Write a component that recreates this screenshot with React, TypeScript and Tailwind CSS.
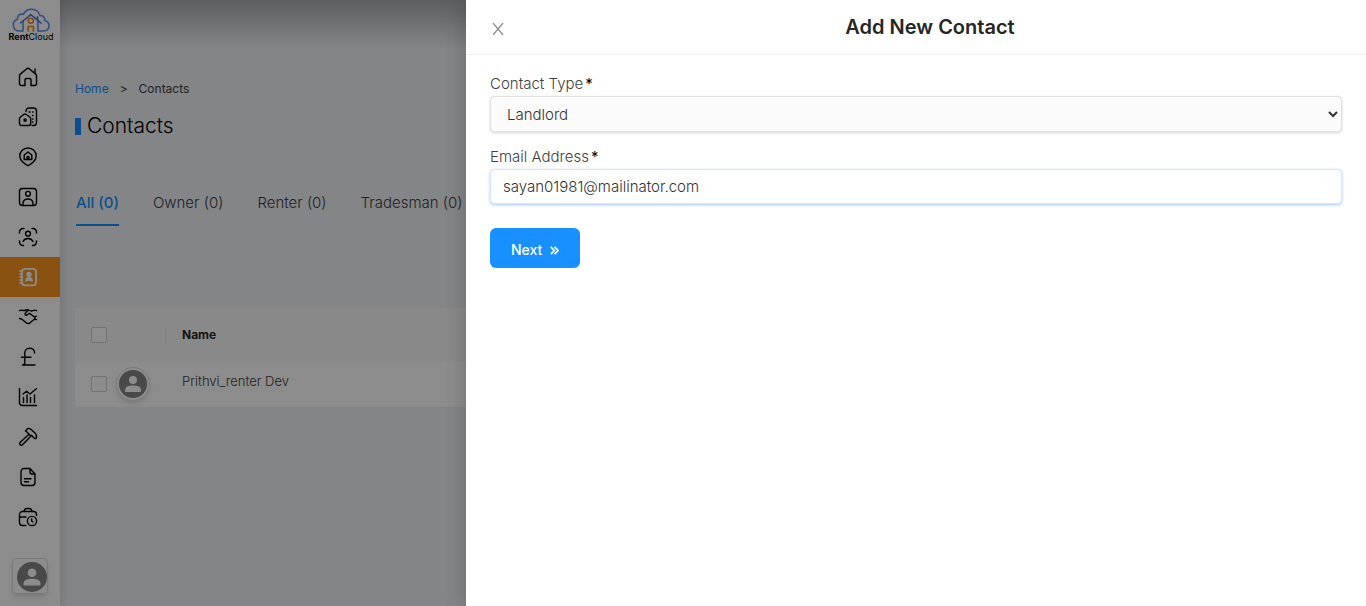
import React from "react";

const font = "font-['Inter','Liberation_Sans',sans-serif]";

function Icon({ children }: { children: React.ReactNode }) {
  return (
    <svg
      aria-hidden="true"
      viewBox="0 0 20 20"
      className="size-5"
      fill="none"
      stroke="currentColor"
      strokeWidth="1.4"
      strokeLinecap="round"
      strokeLinejoin="round"
    >
      {children}
    </svg>
  );
}

const items: { label: string; active?: boolean; icon: React.ReactNode }[] = [
  {
    label: "Dashboard",
    icon: (
      <path d="M7 18.5H3.5A2 2 0 0 1 1.5 16.5V8.8Q1.5 7.8 2.3 7.1L8.8 1.7Q10 .9 11.2 1.7L17.7 7.1Q18.5 7.8 18.5 8.8V16.5A2 2 0 0 1 16.5 18.5H13V13A1.5 1.5 0 0 0 11.5 11.5H8.5A1.5 1.5 0 0 0 7 13ZM17 6V2" />
    ),
  },
  {
    label: "Properties",
    icon: (
      <>
        <path d="M8 4.5V4A3 3 0 0 1 11 1H15.5A3 3 0 0 1 18.5 4V15.5A3 3 0 0 1 15.5 18.5H14" />
        <path d="M1.5 11.7Q1.5 10.8 2.2 10.2L6 7.3Q7 6.7 8 7.3L12 10.2Q12.7 10.8 12.7 11.7V16.5A2 2 0 0 1 10.7 18.5H3.5A2 2 0 0 1 1.5 16.5Z" />
        <rect x="6.2" y="12.2" width="1.8" height="1.8" fill="currentColor" />
        <path d="M11 5H12M14.5 5H15M14.5 8.5H15M14.5 12H15M14.5 15H15" />
      </>
    ),
  },
  {
    label: "Locations",
    icon: (
      <>
        <path d="M10 18.7Q8 18 5 15.3Q1.8 12.4 1.8 9A8.2 8 0 0 1 18.2 9Q18.2 12.4 15 15.3Q12 18 10 18.7Z" />
        <path d="M6.2 12.5V8L10 5L13.8 8V12.5Z" />
        <path d="M9 12V10Q10 8.8 11 10V12" fill="currentColor" />
      </>
    ),
  },
  {
    label: "Profile",
    icon: (
      <>
        <rect x="1.5" y="1.5" width="17" height="17" rx="3" />
        <circle cx="10" cy="6.8" r="2.4" />
        <path d="M5 18V16Q5.5 12 10 12T15 16V18" />
      </>
    ),
  },
  {
    label: "Tenants",
    icon: (
      <>
        <path d="M1.5 6V5A3.5 3.5 0 0 1 5 1.5H6M14 1.5H15A3.5 3.5 0 0 1 18.5 5V6M18.5 14V15A3.5 3.5 0 0 1 15 18.5H14.5M5.5 18.5H5A3.5 3.5 0 0 1 1.5 15V14" />
        <circle cx="10" cy="6.7" r="2.4" />
        <path d="M5 14.5Q6.5 11.5 10 11.5T15 14.5" />
      </>
    ),
  },
  {
    label: "Contacts",
    active: true,
    icon: (
      <>
        <rect x="4" y="1.8" width="14" height="16.5" rx="3" strokeWidth="1.8" />
        <path d="M1.8 4H4M1.8 7H4M1.8 10H4M1.8 13H4M1.8 16H4" strokeWidth="1.6" />
        <circle cx="11" cy="7.4" r="2" fill="currentColor" />
        <path d="M8 14Q8 10.8 11 10.8T14 14L11 12.8Z" fill="currentColor" />
      </>
    ),
  },
  {
    label: "Agreements",
    icon: (
      <path d="M1.5 3.6Q3 2.8 4.5 3.3T8.5 3Q9.5 2.6 10.5 3Q13 4.5 15 3.6T18.5 3.6M10 3.2L7.2 6.4Q6.6 8.8 9 8L11.5 6.2L17 10.5Q17.5 11.5 16.5 12M16.5 9.8L18.5 9.2M1.5 11.5Q3.5 11.5 4.5 12.8L8.5 16Q10 17.2 11.5 16.2L15 13.2Q16.5 12 18.5 12.6" />
    ),
  },
  {
    label: "Payments",
    icon: <path d="M16.5 6V5.2A4.8 4.2 0 0 0 11.6 1.2A5 4.7 0 0 0 6.8 5.8V15.5Q6.8 18 4.5 18H17M3.5 10.2H13" />,
  },
  {
    label: "Reports",
    icon: (
      <path d="M1.5 1.5V15.5A3 3 0 0 0 4.5 18.5H18.5M5.5 15.5V10.5M9 15.5V8M12.5 15.5V10.5M16.5 15.5V8M5 7L8.5 4.2L12 7L18.3 1.8" />
    ),
  },
  {
    label: "Maintenance",
    icon: (
      <path d="M7.5 4L9.8 1.6Q11 1 12.2 1.8L17.5 6.5Q19.2 9.5 18 11.4Q16.8 12 15.7 10.6L13.6 8.5L12 8.2L9.2 5.3ZM11 7.2L2 15.5Q1.2 16.8 2.1 17.7Q3.2 18.8 4.5 17.8L13 9" />
    ),
  },
  {
    label: "Documents",
    icon: (
      <path d="M12 1.5H6A3 3 0 0 0 3 4.5V15.5A3 3 0 0 0 6 18.5H14A3 3 0 0 0 17 15.5V7L12 1.5V5A2 2 0 0 0 14 7H17M6.5 11.7H13M6.5 14.7H10.5" />
    ),
  },
  {
    label: "Work history",
    icon: (
      <>
        <path d="M8 18.5H4.5A3 3 0 0 1 1.5 15.5V7.5A3 3 0 0 1 4.5 4.5H15.5A3 3 0 0 1 18.5 7.5V8.5M6 4.2Q6.5 1.5 9 1.5H11Q13.5 1.5 14 4.2M1.5 10H8" />
        <circle cx="14" cy="14" r="4.6" />
        <path d="M13.7 12V14.2L15 15" />
      </>
    ),
  },
];

function Avatar({ className }: { className: string }) {
  return (
    <svg viewBox="0 0 30 30" className={className} role="img" aria-label="User avatar">
      <circle cx="15" cy="15" r="15" fill="#858585" />
      <circle cx="15" cy="10.8" r="4.3" fill="#fff" />
      <path d="M6.5 23.5V21.5Q6.5 16.7 15 16.7T23.5 21.5V23.5Z" fill="#fff" />
    </svg>
  );
}

function Logo() {
  return (
    <a href="#home" aria-label="RentCloud" className="flex h-[57px] flex-col items-center pt-2 pl-[2px] text-black">
      <svg viewBox="0 0 38 24" className="h-6 w-[38px]" fill="none" strokeLinejoin="round" strokeLinecap="round">
        <path
          d="M11 23H7A6 6 0 0 1 5.5 11.3Q5 5.5 11.5 6.2Q14 1 20 1.2Q26 1.5 28 7.5Q33 7.5 32.8 12.5Q37.5 14 37 18Q36.5 23 31.5 23H26V12.5M11 23V13.5"
          stroke="#5b8ff0"
          strokeWidth="1.6"
        />
        <path d="M8.5 15L18.8 6.6L29 15M25.5 12V8.8" stroke="#4779d9" strokeWidth="1.6" />
        <circle cx="18.8" cy="12.8" r="2.5" stroke="#ef8b20" strokeWidth="1.6" />
        <path d="M16.2 23V18.5H21.4V23" stroke="#ef8b20" strokeWidth="1.7" />
      </svg>
      <span className="text-[9px] leading-[10px]">
        <b>Rent</b>
        <span>Cloud</span>
      </span>
    </a>
  );
}

const tabs = ["All (0)", "Owner (0)", "Renter (0)", "Tradesman (0)"];

export default function App() {
  return (
    <div className={`${font} relative flex min-h-screen overflow-hidden bg-[#f0f2f5] text-[#404040]`}>
      <aside className="z-10 flex w-[60px] shrink-0 flex-col bg-white shadow-[2px_0_10px_rgba(0,0,0,0.12)]">
        <Logo />
        <nav>
          {items.map((item) => (
            <a
              key={item.label}
              href={`#${item.label}`}
              aria-label={item.label}
              className={`flex h-10 items-center pl-[18px] ${item.active ? "bg-[#fa9620] text-white" : "text-black"}`}
            >
              <Icon>{item.icon}</Icon>
            </a>
          ))}
        </nav>
        <button aria-label="Account" className="mt-auto mb-3 ml-3 flex size-9 items-end justify-end rounded-sm border border-[#ddd] pb-px shadow-md">
          <Avatar className="size-[30px]" />
        </button>
      </aside>

      <div className="flex min-w-0 grow flex-col">
        <header className="h-12 shrink-0 bg-linear-to-b from-[#aaacaf] to-[#f0f2f5]" />
        <main className="flex grow flex-col pt-8 pl-[15px]">
          <nav aria-label="Breadcrumb" className="flex gap-[11px] text-xs leading-[18px]">
            <a href="#home" className="text-[#1890ff]">
              Home
            </a>
            <span>&gt;</span>
            <span>Contacts</span>
          </nav>
          <h1 className="mt-4 flex items-center gap-[6px] text-[21px] leading-6 font-light text-black">
            <span className="h-[17px] w-[6px] bg-[#1890ff]" />
            Contacts
          </h1>
          <div className="mt-[54px] flex gap-[34px] pl-px text-[15px] whitespace-nowrap">
            {tabs.map((tab, i) => (
              <button
                key={tab}
                className={`border-b-2 pb-[10px] leading-[22px] ${i === 0 ? "border-[#1890ff] font-medium text-[#1890ff]" : "border-transparent font-light"}`}
              >
                {tab}
              </button>
            ))}
          </div>
          <table className="mt-[82px] w-full bg-white text-left text-xs">
            <thead className="bg-[#fafafa]">
              <tr className="h-[54px]">
                <th className="w-[91px] pl-4">
                  <div className="flex items-center justify-between border-r border-[#e6e6e6]">
                    <input type="checkbox" aria-label="Select all" className="size-4 appearance-none rounded-xs border border-[#d0d0d0] bg-white" />
                  </div>
                </th>
                <th className="pl-4 font-bold text-[#262626]">Name</th>
              </tr>
            </thead>
            <tbody>
              <tr className="h-[45px] border-b border-[#f0f0f0]">
                <td className="pl-4">
                  <div className="flex items-center gap-[9px]">
                    <input type="checkbox" aria-label="Select Prithvi_renter Dev" className="size-4 appearance-none rounded-xs border border-[#d0d0d0] bg-white" />
                    <span className="flex size-[34px] items-center justify-center rounded-full border border-[#ddd] shadow-md">
                      <Avatar className="size-7" />
                    </span>
                  </div>
                </td>
                <td className="pb-[6px] pl-4 text-[13px] font-light">Prithvi_renter Dev</td>
              </tr>
            </tbody>
          </table>
        </main>
      </div>

      <div className="absolute inset-0 z-20 bg-black/45" />

      <section
        role="dialog"
        aria-labelledby="drawer-title"
        className="absolute inset-y-0 right-0 z-30 w-[900px] max-w-full bg-white shadow-[-6px_0_16px_rgba(0,0,0,0.12)]"
      >
        <header className="flex h-[55px] items-center border-b border-[#f0f0f0] px-6">
          <button aria-label="Close" className="mt-1 flex size-4 items-center justify-center text-[#8c8c8c]">
            <svg viewBox="0 0 12 12" className="size-3" fill="none" stroke="currentColor" strokeWidth="1.3">
              <path d="M1 0L11 12M11 0L1 12" />
            </svg>
          </button>
          <h2 id="drawer-title" className="grow pl-3 text-center text-xl font-semibold text-[#262626]">
            Add New Contact
          </h2>
        </header>
        <form className="flex flex-col items-start px-6 pt-[18px] text-[15px] font-light text-[#404040]" onSubmit={(e) => e.preventDefault()}>
          <label htmlFor="type" className="leading-[22px]">
            Contact Type<span className="pl-[2px] font-normal text-black">*</span>
          </label>
          <select
            id="type"
            className="mt-px h-9 w-full rounded-sm border border-[#e0e0e0] bg-[#fbfbfb] pl-3 text-[#333] shadow-[0_1px_3px_rgba(0,0,0,0.15)]"
          >
            <option>Landlord</option>
            <option>Renter</option>
            <option>Tradesman</option>
          </select>
          <label htmlFor="email" className="mt-[14px] leading-[22px]">
            Email Address<span className="pl-[2px] font-normal text-black">*</span>
          </label>
          <input
            id="email"
            type="email"
            defaultValue="sayan01981@mailinator.com"
            className="mt-px h-[35px] w-full rounded-sm border border-[#dbe6f7] bg-white px-3 text-[#333] shadow-[0_1px_3px_rgba(24,120,255,0.4)] outline-none"
          />
          <button type="submit" className="mt-6 flex h-10 items-center gap-2 rounded-md bg-[#1890ff] px-[21px] pt-1 text-sm font-medium text-white">
            Next
            <svg aria-hidden="true" viewBox="0 0 9 9" className="size-[9px]" fill="none" stroke="currentColor" strokeWidth="1.7">
              <path d="M.8 .8L4.3 4.5L.8 8.2M4.5 .8L8 4.5L4.5 8.2" />
            </svg>
          </button>
        </form>
      </section>
    </div>
  );
}
